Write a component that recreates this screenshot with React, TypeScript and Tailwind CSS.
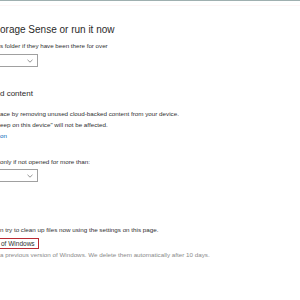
function Dropdown() {
  return (
    <div className="-ml-[2px] flex h-[13px] w-[40px] items-center justify-end border border-[#a0a0a0] pr-[4px]">
      <svg width="6" height="4" viewBox="0 0 6 4" className="text-[#777]">
        <path d="M0.5 0.8 L3 3.2 L5.5 0.8" fill="none" stroke="currentColor" strokeWidth="0.8" />
      </svg>
    </div>
  );
}

export default function App() {
  return (
    <div className="h-[300px] w-[300px] overflow-hidden bg-white font-['Liberation_Sans',Arial,sans-serif] text-[#303030]">
      <div className="h-px bg-[#9fb0b0]" />
      <div className="mt-[4px] h-px bg-[#fdf6f6]" />

      <div className="mt-[18px] whitespace-nowrap text-[10px] leading-[12px] text-[#2a2a2a]">
        orage Sense or run it now
      </div>
      <div className="mt-[6px] whitespace-nowrap text-[6.2px] leading-[8px]">
        s folder if they have been there for over
      </div>
      <div className="mt-[4px]">
        <Dropdown />
      </div>

      <div className="mt-[22px] whitespace-nowrap text-[8px] leading-[10px] text-[#2a2a2a]">d content</div>
      <div className="mt-[9px] whitespace-nowrap text-[6.25px] leading-[11px]">
        <p>ace by removing unused cloud-backed content from your device.</p>
        <p>eep on this device" will not be affected.</p>
        <p className="text-[#0067b8]">on</p>
      </div>

      <div className="mt-[17px] whitespace-nowrap text-[6.25px] leading-[8px]">only if not opened for more than:</div>
      <div className="mt-[3px]">
        <Dropdown />
      </div>

      <div className="mt-[44px] whitespace-nowrap text-[6.25px] leading-[8px]">
        n try to clean up files now using the settings on this page.
      </div>
      <div className="mt-[4px] -ml-[2px] flex h-[11px] w-[41px] items-center border-[1.5px] border-[#b82a33] pl-[2px] text-[6.5px] leading-[8px] whitespace-nowrap">
        of Windows
      </div>
      <div className="mt-[2px] whitespace-nowrap text-[6.25px] leading-[8px] text-[#8a8a8a]">
        a previous version of Windows. We delete them automatically after 10 days.
      </div>
    </div>
  );
}
